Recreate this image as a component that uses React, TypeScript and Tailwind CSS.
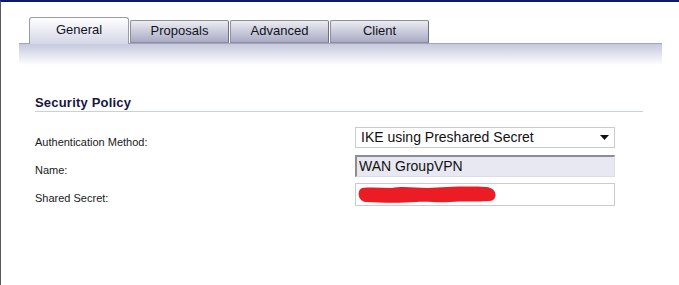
const TABS = ['General', 'Proposals', 'Advanced', 'Client']

function Tab({ label, active }: { label: string; active?: boolean }) {
  if (active) {
    return (
      <div className="relative z-10 -mb-px flex h-[27px] w-[100px] items-center justify-center rounded-t-[3px] border border-b-0 border-[#9a9aa8] bg-gradient-to-b from-white to-[#d4d6e6] pb-[2px] text-[13px] text-[#111122]">
        {label}
      </div>
    )
  }
  return (
    <div className="flex h-[23px] w-[99px] items-center justify-center rounded-t-[2px] border border-[#8e8e9c] border-r-[#6e6e7c] bg-gradient-to-b from-[#ececf0] to-[#a9abc6] pb-[2px] text-[13px] text-[#111122]">
      {label}
    </div>
  )
}

function Row({ label, children }: { label: string; children: React.ReactNode }) {
  return (
    <div className="flex h-[28px] items-start">
      <div className="w-[320px] pt-[9px] text-[11px] leading-[13px] text-[#1a1a1a]">{label}</div>
      {children}
    </div>
  )
}

export default function App() {
  return (
    <div
      className="h-[285px] w-[679px] overflow-hidden border-t-2 border-l border-t-[#0b1a6e] border-l-[#5a5a5a] bg-white"
      style={{ fontFamily: '"Liberation Sans", Arial, sans-serif' }}
    >
      <div className="ml-[18px] w-[643px] pt-[15px]">
        <div className="flex items-end gap-[1px] pl-[10px]">
          {TABS.map((t, i) => (
            <Tab key={t} label={t} active={i === 0} />
          ))}
        </div>
        <div className="h-[22px] border-t border-[#a4a6b8] bg-gradient-to-b from-[#c6c8df] to-white" />
      </div>

      <div className="ml-[34px] mt-[31px] w-[608px]">
        <div className="border-b border-[#c8d2de] pb-[1px] text-[13px] font-bold leading-[14px] tracking-[0.2px] text-[#16163c]">
          Security Policy
        </div>

        <div className="mt-[15px] flex flex-col">
          <Row label="Authentication Method:">
            <div className="flex h-[21px] w-[260px] items-center justify-between border border-[#c8cbd2] bg-white pl-[5px] pr-[5px] text-[14px] text-[#111]">
              <span>IKE using Preshared Secret</span>
              <svg width="9" height="5" viewBox="0 0 9 5">
                <path d="M0 0h9L4.5 5z" fill="#111" />
              </svg>
            </div>
          </Row>
          <Row label="Name:">
            <div className="flex h-[22px] w-[260px] items-center border border-[#dcdce4] border-l-2 border-t-2 border-l-[#8c8c94] border-t-[#8c8c94] bg-[#e8e8f2] pl-[2px] text-[14px] text-[#111]">
              WAN GroupVPN
            </div>
          </Row>
          <Row label="Shared Secret:">
            <div className="flex h-[23px] w-[260px] items-center border border-[#c8cbd2] bg-white pl-[2px]">
              <svg width="140" height="17" viewBox="0 0 140 17" className="shrink-0">
                <path
                  d="M4 2 C14 1, 24 2, 34 2 C44 0, 58 2, 70 2 C86 1, 110 0, 128 1 C140 2, 140 14, 132 15 C118 16, 104 15, 92 16 C80 17, 70 15, 58 16 C44 17, 26 17, 8 16 C-1 15, -1 4, 4 2z"
                  fill="#ec1c24"
                />
              </svg>
            </div>
          </Row>
        </div>
      </div>
    </div>
  )
}
